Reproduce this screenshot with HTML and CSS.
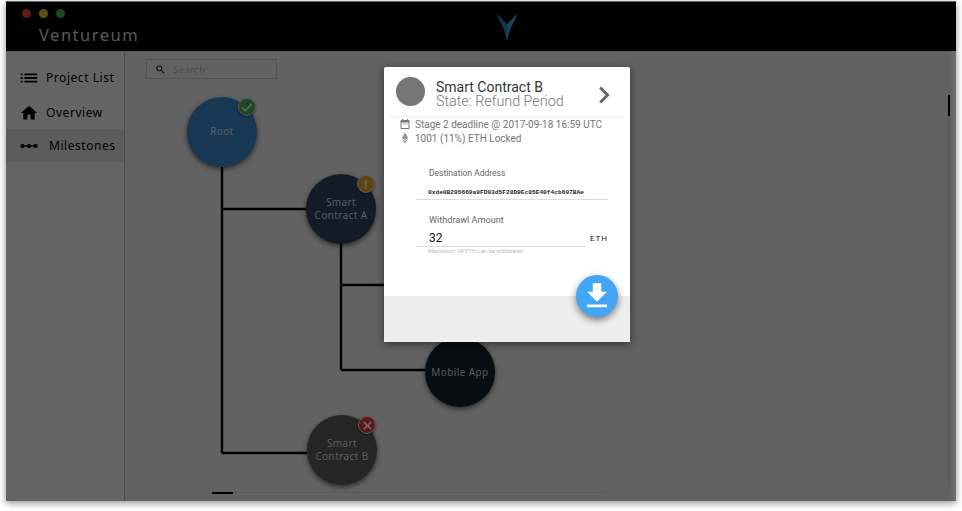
FILE: index.html
```html
<!DOCTYPE html>
<html>
<head>
    <title>Ventureum</title>
    <link rel="stylesheet" href="styles.css">
</head>
<body>
    <div class="window">
        <div class="topbar">
            <div class="lights">
                <span class="light red"></span>
                <span class="light yellow"></span>
                <span class="light green"></span>
            </div>
            <div class="brand">Ventureum</div>
            <svg class="logo" width="22" height="28" viewBox="0 0 22 28">
                <polygon points="0,0 11,11 11,28 8,17" fill="#2f7fb8"/>
                <polygon points="22,0 11,11 11,28 14,17" fill="#4fa0d8"/>
            </svg>
        </div>
        <div class="main">
            <div class="sidebar">
                <div class="navitem first">
                    <svg class="navicon" width="22" height="22" viewBox="0 0 24 24"><path d="M3 13h2v-2H3v2zm0 4h2v-2H3v2zm0-8h2V7H3v2zm4 4h14v-2H7v2zm0 4h14v-2H7v2zM7 7v2h14V7H7z"/></svg>
                    <span>Project List</span>
                </div>
                <div class="navitem">
                    <svg class="navicon" width="22" height="22" viewBox="-1.500 -1.500 27 27"><path d="M10 20v-6h4v6h5v-8h3L12 3 2 12h3v8z"/></svg>
                    <span>Overview</span>
                </div>
                <div class="navitem current">
                    <svg class="navicon" width="22" height="22" viewBox="-1.500 -1.500 27 27"><circle cx="4" cy="12" r="2.600"/><circle cx="12" cy="12" r="2.600"/><circle cx="20" cy="12" r="2.600"/><rect x="3" y="11.200" width="18" height="1.600"/></svg>
                    <span>Milestones</span>
                </div>
            </div>
            <div class="canvas">
                <div class="search">
                    <svg width="11" height="11" viewBox="0 0 24 24"><path d="M15.500 14h-.79l-.28-.27A6.470 6.470 0 0 0 16 9.500 6.500 6.500 0 1 0 9.500 16c1.610 0 3.090-.59 4.230-1.570l.27.28v.79l5 4.990L20.490 19l-4.990-5zm-6 0C7 14 5 12 5 9.500S7 5 9.500 5 14 7 14 9.500 12 14 9.500 14z"/></svg>
                    <span>Search</span>
                </div>

                <svg class="lines" width="831" height="449" viewBox="0 0 831 449">
                    <path d="M97 115V401M97 157H181M97 401H182M216 192V318M216 233H259M216 318H300" fill="none" stroke="#000" stroke-width="2.400"/>
                </svg>

                <div class="node root">
                    <span>Root</span>
                    <span class="badge ok"><svg width="14" height="14" viewBox="0 0 24 24"><path d="M9 16.200 4.800 12l-1.900 1.900L9 20 21 8l-1.900-1.900z"/></svg></span>
                </div>
                <div class="node contract-a">
                    <span>Smart<br>Contract A</span>
                    <span class="badge warn"><b>!</b></span>
                </div>
                <div class="node mobile">
                    <span>Mobile App</span>
                </div>
                <div class="node contract-b">
                    <span>Smart<br>Contract B</span>
                    <span class="badge fail"><svg width="13" height="13" viewBox="0 0 24 24"><path d="M20 6.400 17.600 4 12 9.600 6.400 4 4 6.400 9.600 12 4 17.600 6.400 20 12 14.400 17.600 20 20 17.600 14.400 12z"/></svg></span>
                </div>

                <div class="vtrack"><div class="vthumb"></div></div>
                <div class="hscroll"><div class="hthumb"></div></div>
            </div>
        </div>
        <div class="scrim"></div>
        <div class="edge"></div>

        <div class="dialog">
            <div class="dialog-body">
                <div class="dialog-head">
                    <div class="avatar"></div>
                    <div class="titles">
                        <div class="title">Smart Contract B</div>
                        <div class="state">State: Refund Period</div>
                    </div>
                    <svg class="chevron" width="34" height="34" viewBox="0 0 24 24"><path d="M10 6 8.590 7.410 13.170 12l-4.580 4.590L10 18l6-6z"/></svg>
                </div>
                <div class="info">
                    <div class="inforow">
                        <svg width="12" height="12" viewBox="0 0 24 24"><path d="M9 11H7v2h2v-2zm4 0h-2v2h2v-2zm4 0h-2v2h2v-2zm2-7h-1V2h-2v2H8V2H6v2H5a2 2 0 0 0-2 2v14a2 2 0 0 0 2 2h14a2 2 0 0 0 2-2V6a2 2 0 0 0-2-2zm0 16H5V9h14v11z"/></svg>
                        <span>Stage 2 deadline @ 2017-09-18 16:59 UTC</span>
                    </div>
                    <div class="inforow">
                        <svg class="eth" width="12" height="12" viewBox="0 0 24 24"><path d="M12 1 5.500 12.200 12 16l6.500-3.800zM5.500 13.800 12 23l6.500-9.200L12 17.600z"/></svg>
                        <span>1001 (11%) ETH Locked</span>
                    </div>
                </div>
                <div class="field address">
                    <div class="label">Destination Address</div>
                    <div class="addr">0xde0B295669a9FD93d5F28D9Ec85E40f4cb697BAe</div>
                </div>
                <div class="field amount">
                    <div class="label wide">Withdrawl Amount</div>
                    <div class="amountrow">
                        <div class="value">32</div>
                        <div class="unit">ETH</div>
                    </div>
                    <div class="hint">Maximium 34 ETH can be withdrawn</div>
                </div>
            </div>
            <div class="dialog-foot"></div>
            <div class="fab">
                <svg width="34" height="34" viewBox="0 0 24 24"><path d="M19 9h-4V3H9v6H5l7 7 7-7zM5 18v2h14v-2H5z"/></svg>
            </div>
        </div>
    </div>
</body>
</html>
```

FILE: styles.css
```css
html, body
{
    margin: 0;
    padding: 0;
    background: #fff;
}
body
{
    padding: 1px 6px 0;
    width: 950px;
    height: 510px;
    overflow: hidden;
    font-family: "Lato", sans-serif;
}
.window
{
    position: relative;
    width: 950px;
    height: 500px;
    display: flex;
    flex-direction: column;
    background: #fff;
    box-shadow: 0 2px 7px rgba(0, 0, 0, 0.45);
}
.topbar
{
    position: relative;
    height: 49px;
    flex: none;
    margin-top: 1px;
    background: #000;
    color: #ddd;
    padding-left: 16px;
}
.lights
{
    display: flex;
    gap: 8px;
    padding-top: 7px;
}
.light
{
    width: 9px;
    height: 9px;
    border-radius: 50%;
}
.red { background: #ed3f3a; }
.yellow { background: #e9c82e; }
.green { background: #3eb54a; }
.brand
{
    font-family: "Noto Sans", sans-serif;
    font-size: 16.500px;
    letter-spacing: 1.500px;
    line-height: 22px;
    padding: 6px 0 0 17px;
}
.logo
{
    position: absolute;
    left: 490px;
    top: 11px;
}
.main
{
    flex: 1;
    display: flex;
    border-top: 1px solid #ddd;
    min-height: 0;
}
.sidebar
{
    width: 118px;
    flex: none;
    border-right: 1px solid #bbb;
    background: #fafafa;
    padding-top: 9px;
    box-sizing: content-box;
}
.navitem
{
    display: flex;
    align-items: center;
    gap: 6px;
    height: 33px;
    padding-left: 12px;
    font-family: "Noto Sans", sans-serif;
    font-size: 12px;
    letter-spacing: 0.550px;
    color: #000;
}
.navitem.first { margin-bottom: 2px; }
.navitem.current
{
    background: #e6e6e6;
    gap: 9px;
}
.navicon { flex: none; }
.canvas
{
    position: relative;
    flex: 1;
    background: #f4f4f4;
}
.search
{
    position: absolute;
    left: 21px;
    top: 7px;
    width: 121px;
    height: 18px;
    border: 1px solid #ccc;
    display: flex;
    align-items: center;
    gap: 7px;
    padding-left: 8px;
    font-size: 10px;
    color: #bbb;
    letter-spacing: 0.500px;
}
.lines
{
    position: absolute;
    left: 0;
    top: 0;
}
.node
{
    position: absolute;
    width: 70px;
    height: 70px;
    border-radius: 50%;
    display: flex;
    align-items: center;
    justify-content: center;
    text-align: center;
    font-family: "Noto Sans", sans-serif;
    font-size: 10px;
    line-height: 13px;
    letter-spacing: 0.400px;
    color: rgba(255, 255, 255, 0.85);
    box-shadow: 0 2px 5px rgba(0, 0, 0, 0.6);
}
.root { left: 62px; top: 45px; background: #3a8ad0; padding-bottom: 2px; box-sizing: border-box; }
.contract-a { left: 181px; top: 122px; background: #2f4560; }
.mobile { left: 300px; top: 285px; background: #142030; }
.contract-b { left: 182px; top: 363px; background: #5c5c5c; }
.badge
{
    position: absolute;
    right: 1px;
    top: 1px;
    width: 16px;
    height: 16px;
    border-radius: 50%;
    border: 1.500px solid #e4e4e4;
    display: flex;
    align-items: center;
    justify-content: center;
    box-shadow: 0 1px 2px rgba(0, 0, 0, 0.5);
}
.badge svg { fill: #fff; }
.badge b { font-size: 13px; line-height: 13px; color: #fff; font-family: "Liberation Sans", sans-serif; }
.ok { background: #4caf50; }
.warn { background: #e8a825; }
.fail { background: #e53935; }
.vtrack
{
    position: absolute;
    left: 823px;
    top: 43px;
    width: 2px;
    height: 392px;
    background: #e4e4e4;
}
.vthumb
{
    height: 21px;
    background: #000;
}
.hscroll
{
    position: absolute;
    left: 87px;
    top: 440px;
    width: 392px;
    height: 1px;
    background: #e0e0e0;
}
.hthumb
{
    width: 21px;
    height: 2px;
    background: #000;
}
.scrim
{
    position: absolute;
    left: 0;
    top: 0;
    right: 0;
    bottom: 0;
    background: rgba(0, 0, 0, 0.6);
}
.edge
{
    position: absolute;
    right: 0;
    top: 50px;
    bottom: 0;
    width: 6px;
    background: linear-gradient(to right, transparent, rgba(255, 255, 255, 0.1));
}
.dialog
{
    position: absolute;
    left: 378px;
    top: 66px;
    width: 246px;
    height: 275px;
    display: flex;
    flex-direction: column;
    background: #fff;
    font-family: "Roboto", sans-serif;
    box-shadow: 0 2px 8px rgba(0, 0, 0, 0.5);
    border-radius: 2px;
}
.dialog-body { flex: 1; }
.dialog-foot
{
    height: 46px;
    background: #eee;
}
.dialog-head
{
    display: flex;
    align-items: center;
    height: 49px;
    margin: 0 5px 0 6px;
    padding-left: 6px;
    border-bottom: 1px solid #eee;
}
.avatar
{
    width: 29px;
    height: 29px;
    border-radius: 50%;
    background: #757575;
    flex: none;
}
.titles
{
    flex: 1;
    padding: 4px 0 0 11px;
    line-height: 14px;
    font-weight: 300;
}
.title { color: #333; font-weight: 400; font-size: 14px; }
.state { color: #777; font-size: 14.300px; }
.chevron { fill: #666; margin: 6px 4px 0 0; flex: none; }
.info { padding: 0 0 0 15px; }
.inforow
{
    display: flex;
    align-items: center;
    gap: 4px;
    height: 14px;
    font-size: 10px;
    color: #757575;
}
.inforow svg { fill: #757575; flex: none; }
.inforow svg.eth { fill: #999; }
.field { margin-left: 32px; width: 192px; }
.label
{
    font-size: 8.500px;
    color: #666;
    padding-left: 13px;
}
.label.wide { font-size: 9.100px; }
.address { margin-top: 23px; }
.addr
{
    font-family: "Liberation Mono", monospace;
    font-size: 6.200px;
    font-weight: bold;
    color: #222;
    border-bottom: 1px solid #ddd;
    padding: 11px 0 3px 12px;
}
.amount { margin-top: 15px; }
.amountrow
{
    display: flex;
    align-items: flex-end;
    margin-top: 6px;
}
.value
{
    width: 157px;
    font-size: 12px;
    line-height: 15px;
    padding: 0 0 0 13px;
    color: #111;
    border-bottom: 1px solid #ddd;
}
.unit
{
    margin-left: 4px;
    font-size: 8px;
    letter-spacing: 0.900px;
    color: #111;
    padding-bottom: 4px;
}
.hint
{
    font-size: 5.870px;
    color: #bbb;
    padding: 1px 0 0 12px;
}
.fab
{
    position: absolute;
    right: 12px;
    bottom: 25px;
    width: 42px;
    height: 42px;
    border-radius: 50%;
    background: #42a5f5;
    display: flex;
    align-items: center;
    justify-content: center;
    box-shadow: 0 3px 7px rgba(0, 0, 0, 0.5);
}
.fab svg { fill: #fff; }
```
